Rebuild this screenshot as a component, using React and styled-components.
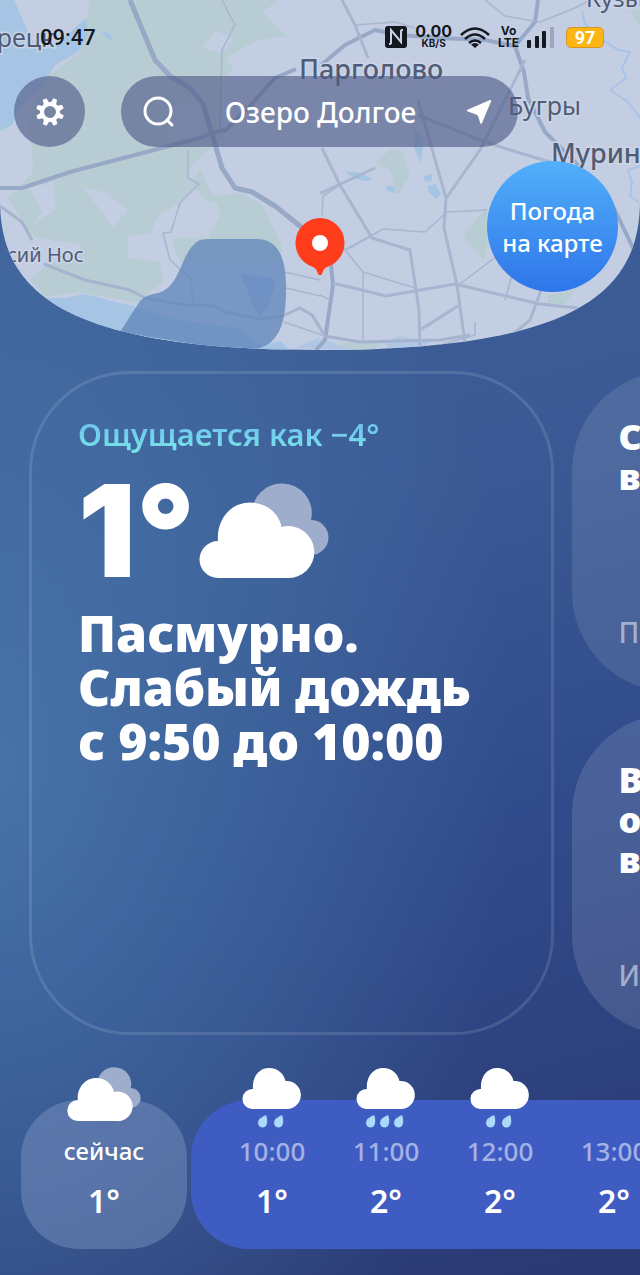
import React from 'react';
import styled, { createGlobalStyle, css } from 'styled-components';

const GlobalStyle = createGlobalStyle`
  * {
    box-sizing: border-box;
  }
  body {
    margin: 0;
    font-family: 'Noto Sans', 'Open Sans', sans-serif;
    color: #ffffff;
    background: #2c3f7c;
  }
  button,
  input {
    padding: 0;
    border: none;
    background: none;
    color: inherit;
    font-family: inherit;
  }
  button {
    cursor: pointer;
  }
  svg {
    display: block;
  }
`;

const Page = styled.div`
  display: flex;
  flex-direction: column;
  min-height: 100vh;
  overflow: hidden;
  background: radial-gradient(ellipse 80% 64% at 0% 60%, rgba(72, 118, 170, 0.9) 0%, rgba(72, 118, 170, 0) 100%),
    linear-gradient(165deg, #3f6199 0%, #3b5a95 40%, #304b8b 66%, #2d427f 84%, #2a3871 100%);
`;

const Header = styled.header`
  display: grid;
  grid-template-columns: minmax(0, 1fr);

  > * {
    grid-area: 1 / 1;
  }
`;

const MapDrawing = styled.svg`
  width: 100%;
  height: auto;

  .place {
    fill: #505b75;
    stroke: #cbd5e6;
    stroke-width: 3px;
    paint-order: stroke;
  }
`;

const HeaderContent = styled.div`
  position: relative;
  display: flex;
  flex-direction: column;
`;

const StatusBar = styled.div`
  display: flex;
  align-items: center;
  justify-content: space-between;
  height: 76px;
  padding: 0 36px 2px 40px;
  font-family: Roboto, sans-serif;
  color: #14181f;
`;

const Clock = styled.time`
  font-size: 22px;
  font-weight: 500;
`;

const StatusIcons = styled.div`
  display: flex;
  align-items: center;
  gap: 8px;
`;

const StackedLabel = styled.div`
  display: flex;
  flex-direction: column;
  align-items: center;
  font-family: Inter, sans-serif;
  font-size: ${(props) => (props.$even ? 12 : 16)}px;
  line-height: 12px;
  font-weight: 700;

  small {
    font-size: ${(props) => (props.$even ? 12 : 10)}px;
    line-height: 12px;
  }
`;

const Battery = styled.div`
  display: flex;
  align-items: center;
  justify-content: center;
  width: 38px;
  height: 21px;
  margin-left: 4px;
  border: 1px solid #d9981c;
  border-radius: 5px;
  background: #fdb515;
  color: #ffffff;
  font-size: 18px;
  font-weight: 700;
`;

const SearchRow = styled.div`
  display: flex;
  gap: 36px;
  padding: 0 122px 0 14px;
`;

const glass = css`
  height: 71px;
  border-radius: 36px;
  background: rgba(80, 92, 136, 0.64);
`;

const SettingsButton = styled.button`
  ${glass}
  display: flex;
  flex-shrink: 0;
  align-items: center;
  justify-content: center;
  width: 71px;
`;

const SearchBox = styled.div`
  ${glass}
  display: flex;
  flex: 1;
  align-items: center;
  min-width: 0;
  padding: 0 26px 0 22px;
`;

const SearchInput = styled.input`
  flex: 1;
  min-width: 0;
  font-size: 28px;
  font-weight: 500;
  text-align: center;
  outline: none;
`;

const MapButton = styled.button`
  align-self: flex-end;
  width: 131px;
  height: 131px;
  margin: 14px 22px 0 0;
  border-radius: 50%;
  background: linear-gradient(180deg, #52b0fa 0%, #2e75ea 100%);
  font-size: 24px;
  line-height: 32px;
  font-weight: 500;
`;

const Cards = styled.main`
  display: flex;
  flex: 1;
  gap: 18px;
  margin-top: 21px;
  padding-left: 29px;
`;

const MainCard = styled.section`
  flex: 0 0 86%;
  min-height: 480px;
  padding: 38px 44px 44px 46px;
  border: 3px solid rgba(255, 255, 255, 0.12);
  border-radius: 100px;
`;

const FeelsLike = styled.p`
  width: fit-content;
  margin: 0;
  background: linear-gradient(180deg, #6cbcf0 15%, #78e2e8 85%);
  background-clip: text;
  color: transparent;
  font-size: 31px;
  line-height: 44px;
  font-weight: 600;
`;

const Current = styled.div`
  display: flex;
  align-items: center;
  gap: 4px;
  height: 150px;
`;

const Temperature = styled.div`
  font-family: Inter, 'Noto Sans', sans-serif;
  font-size: 128px;
  line-height: 144px;
  font-weight: 900;
`;

const Summary = styled.h1`
  margin: 0;
  font-size: 50px;
  line-height: 54px;
  font-weight: 900;
  white-space: nowrap;
`;

const SideCards = styled.div`
  display: flex;
  flex: 0 0 50%;
  flex-direction: column;
  gap: 22px;
`;

const SideCard = styled.section`
  display: flex;
  flex: 1;
  flex-direction: column;
  justify-content: space-between;
  padding: 46px;
  border-radius: 100px;
  background: ${(props) => props.$tone};
`;

const SideTitle = styled.h2`
  margin: 0;
  font-size: 36px;
  line-height: 40px;
  font-weight: 900;
`;

const SideNote = styled.p`
  margin: 0 0 -8px;
  font-size: 28px;
  line-height: 44px;
  font-weight: 500;
  color: rgba(255, 255, 255, 0.5);
`;

const Hours = styled.footer`
  display: flex;
  gap: 4px;
  margin-top: 65px;
  padding: 0 0 26px 21px;
`;

const HourPanel = styled.div`
  display: flex;
  flex: ${(props) => (props.$now ? '0 0 166px' : '0 0 100%')};
  height: 149px;
  padding-left: ${(props) => (props.$now ? 0 : 24)}px;
  border-radius: 58px;
  background: ${(props) => (props.$now ? 'rgba(134, 156, 200, 0.42)' : '#3f5cc2')};
`;

const Hour = styled.div`
  display: flex;
  flex-direction: column;
  align-items: center;
  width: ${(props) => (props.$now ? '100%' : '114px')};
  margin-top: -33px;
`;

const HourIcon = styled.div`
  height: 68px;
`;

const HourTime = styled.div`
  font-size: ${(props) => (props.$now ? 24 : 26)}px;
  line-height: 32px;
  font-weight: 500;
  color: ${(props) => (props.$now ? '#ffffff' : '#a5b2e6')};
`;

const HourTemp = styled.div`
  margin-top: 12px;
  font-size: 32px;
  line-height: 44px;
  font-weight: 600;
`;

const hours = [
  { time: '10:00', temp: '1°', drops: 2 },
  { time: '11:00', temp: '2°', drops: 3 },
  { time: '12:00', temp: '2°', drops: 2 },
  { time: '13:00', temp: '2°', drops: 0 },
];

const sideCards = [
  { lines: ['С', 'в'], note: 'По', tone: 'rgba(255, 255, 255, 0.1)' },
  { lines: ['В', 'о', 'в'], note: 'И', tone: 'rgba(255, 255, 255, 0.12)' },
];

const CITY_ROADS = [
  'M320 193 L323 192 L375 168 M342 0 L355 25 L368 58',
  'M322 148 L340 185 L372 238 L410 250 L419 310 L420 350',
  'M418 100 L446 198 L444 228 L457 285 L466 350',
  'M525 60 L480 150 L447 197',
  'M418 115 L480 140 L510 150 L560 165',
  'M333 283 L386 296 L455 284 L540 304 L578 308',
  'M545 280 L530 320 L500 345 M420 330 L458 306',
];

const THIN_ROADS = [
  'M222 0 L235 25 L222 50 L220 130',
  'M188 150 L188 178 L199 184 L180 203 L171 232 L163 233 L170 260 L190 278 L194 305',
  'M322 216 L323 196 L340 185 M322 222 L345 250 L363 272 L363 340 M350 248 L383 229 L425 232 L447 212',
  'M363 272 L415 288 M345 250 L372 235 M447 212 L487 210 M460 284 L505 250 M505 300 L513 272',
  'M284 272 L320 280 M286 288 L320 296 M284 322 L322 335 M320 295 L330 300 M475 322 L475 335 L440 345',
  'M485 0 L505 16 L540 22 L575 8 L590 0 M355 25 L395 22 L415 28',
];

const MapBackdrop = () => (
  <MapDrawing viewBox="0 0 640 350" aria-hidden="true">
    <clipPath id="map-edge">
      <path d="M0 0H640V200C640 290 580 350 320 350C60 350 0 290 0 200Z" />
    </clipPath>
    <g clipPath="url(#map-edge)">
      <rect width="640" height="350" fill="#c3cee2" />
      <g fill="#b8cdd3">
        <path d="M90 0H280L262 12L287 36L258 40L225 58L234 70L222 80V138L192 165L188 178L199 184L180 203L160 213L150 234L128 236V258L160 262L163 282L136 303L80 292L45 297L30 280L48 264L75 258L82 244L36 238L24 225L8 198L33 172L32 150L27 128L40 82L80 52Z" />
        <path d="M192 185L200 168L212 194L224 196L240 192L262 205L282 245L280 262H180L172 240L205 232L220 216Z" />
        <path d="M390 150L402 150L410 176L398 195L390 170L376 162Z M465 232L487 208V245L484 260L465 240Z" />
        <path d="M630 10H640V28Z M548 295L575 290L565 304H548Z M340 343L385 340L375 350H340Z" />
      </g>
      <g fill="#c3cee2">
        <path d="M64 179L84 187L106 193L128 210L113 227L83 187Z" />
        <path d="M30 188L54 182L55 210L32 225L42 212Z M202 47L216 31L233 38L222 54Z" />
        <path d="M163 214L187 202L217 202L221 214L208 238H176L171 228Z M165 108L205 92L212 132L165 142Z" opacity="0.7" />
      </g>
      <g fill="#a6c5e4">
        <path d="M0 0H14L25 25L35 45L52 48L86 18L88 35L78 52L55 65L41 88L20 108L12 125L0 131Z" />
        <path d="M101 31Q109 30 114 40Q106 40 101 31Z" />
        <path d="M40 298L66 298L84 294L132 306L180 320L236 328L262 345L280 341L290 350H100Z" />
        <path d="M346 172Q360 170 373 180Q360 184 346 172Z M386 186L394 186L396 194L386 190Z M424 176L432 174L431 182L424 181Z M428 186L436 184L441 194L436 199L428 192Z M414 130L424 140L421 164L414 148Z" />
        <path d="M295 348L318 338L330 342L350 350Z M384 342L400 336L430 342L420 350H390Z" opacity="0.7" />
      </g>
      <g fill="none" stroke="#98a8c7" strokeLinejoin="round">
        <path strokeWidth="5" d="M130 0L155 60L170 76L190 88L203 104L212 134L222 168L235 188L252 192L275 206L305 230" />
        <path strokeWidth="4" d="M0 188H22L70 172L200 138L212 133L226 130L248 108L275 78L296 69" />
        <path strokeWidth="4" d="M320 66L345 45L375 30L400 35L440 38L485 40L515 46L524 72L528 98L545 132L575 162L610 200L634 250" />
        <path strokeWidth="4" d="M538 0L535 22L515 46M306 232L330 255L333 285L325 340L316 350" />
        <path strokeWidth="3" stroke="#a5b3cf" d="M0 206L22 222L32 240M44 264L85 280L130 290L145 298L185 305L215 306L225 312L260 319L282 316L300 308L312 315L325 336L360 342L440 340L470 335" />
        {CITY_ROADS.map((d) => (
          <path key={d} d={d} strokeWidth="3" stroke="#a7b5d1" />
        ))}
        {THIN_ROADS.map((d) => (
          <path key={d} d={d} strokeWidth="1.500" stroke="#a7b5d1" />
        ))}
        <path strokeWidth="2" stroke="#a8c3e6" d="M582 10L585 24L600 38L618 50L630 52L622 68L626 78L610 90L628 102L640 118M640 166L628 170L632 182L630 196L638 202" />
      </g>
      <path
        fill="#5c82b8"
        fillOpacity="0.72"
        d="M120 332L140 301Q145 295 158 293C182 287 180 250 200 240Q205 239 212 239H258C282 240 287 265 286 295C285 328 277 346 252 350L200 345Z"
      />
      <path fill="#5c86bf" fillOpacity="0.3" d="M240 274L273 278L275 285L268 307L260 316L254 308L248 292Z" />
      <g className="place" fontFamily="Noto Sans, sans-serif">
        <text x="-16" y="47" fontSize="25">урецк</text>
        <text x="299" y="79" fontSize="27" fontWeight="500">Парголово</text>
        <text x="508" y="115" fontSize="25">Бугры</text>
        <text x="551" y="163" fontSize="27" fontWeight="500">Мурино</text>
        <text x="586" y="7" fontSize="24">Кузьм</text>
        <text x="7" y="262" fontSize="20">сий Нос</text>
      </g>
      <path fill="#ff3d1c" d="M320 218a25 25 0 0 1 8 48.500C324 268 323 271 321.500 275h-3C317 271 316 268 312 266.500A25 25 0 0 1 320 218Z" />
      <circle cx="320" cy="243" r="8" fill="#ffffff" />
    </g>
  </MapDrawing>
);

const GEAR_TEETH = [22, 67, 112, 157, 202, 247, 292, 337];

const GearIcon = () => (
  <svg width="30" height="30" viewBox="-15 -15 30 30">
    <circle r="8" fill="none" stroke="#ffffff" strokeWidth="4" />
    {GEAR_TEETH.map((angle) => (
      <path key={angle} d="M-3 -8L-2 -14H2L3 -8Z" fill="#ffffff" transform={`rotate(${angle})`} />
    ))}
  </svg>
);

const SearchIcon = () => (
  <svg width="32" height="32" viewBox="0 0 32 32" fill="none" stroke="#ffffff" strokeWidth="3" strokeLinecap="round">
    <circle cx="15" cy="15" r="13" />
    <path d="M24 24l5 5" />
  </svg>
);

const ArrowIcon = () => (
  <svg width="26" height="26" viewBox="0 0 26 26">
    <path d="M24 1Q25.500 .5 25 2.500L16 24Q15 26 14 23.500L12.500 18Q12 16 10 15.500L2 12.500Q-.5 11.300 2 10.500Z" fill="#ffffff" />
  </svg>
);

const NfcIcon = () => (
  <svg width="22" height="22" viewBox="0 0 22 22">
    <rect width="22" height="22" rx="3" fill="#14181f" />
    <path d="M6 18V4L16 16V4M4 18H6M16 4H18" fill="none" stroke="#c9d3e5" strokeWidth="2" />
    <path d="M6 5V17M16 5V17" stroke="#c9d3e5" strokeWidth="1.500" />
  </svg>
);

const WifiIcon = () => (
  <svg width="30" height="21" viewBox="0 0 30 21" fill="none" stroke="#14181f" strokeWidth="2.500">
    <path d="M1 8Q15 -5 29 8M5 12Q15 3 25 12M9 16Q15 11 21 16" />
    <path d="M15 21L11 17.500Q15 14.500 19 17.500Z" fill="#14181f" stroke="none" />
  </svg>
);

const SignalIcon = () => (
  <svg width="27" height="21" viewBox="0 0 27 21" fill="#14181f">
    <rect y="13" width="4" height="8" rx="1" />
    <rect x="8" y="9" width="4" height="12" rx="1" />
    <rect x="15" y="4" width="4" height="17" rx="1" />
    <rect x="23" width="4" height="21" rx="1" fill="#9ca6ba" />
  </svg>
);

const CLOUD = 'M19 95A18.500 18.500 0 0 1 19 58C17 38 31 19.500 51 19.500C67 19.500 80 30 82.500 44A26 26 0 1 1 87 95Z';

const CloudsIcon = ({ width }) => (
  <svg width={width} viewBox="0 0 130 96">
    <path d="M82.500 .5A29.500 29.500 0 0 1 112 37A17.500 17.500 0 1 1 112 72H90L53 30A29.500 29.500 0 0 1 82.500 .5Z" fill="#9dadcb" />
    <path d={CLOUD} fill="#ffffff" />
  </svg>
);

const RainIcon = ({ drops }) => (
  <svg width="62" height="62" viewBox="0 0 62 62">
    <path d="M11 42A10 10 0 0 1 12 22C11 10 18 1 28 1C37 1 43 7 44.500 14A14 14 0 1 1 47 42Z" fill="#ffffff" />
    {Array.from({ length: drops }, (_, i) => (
      <path
        key={i}
        d="M8 0C10 4 10 12 5 12.500C-1 12.500 -1 6 2 3.500Q5 1 8 0Z"
        fill="#a9dafa"
        transform={`translate(${drops === 3 ? 11 + i * 14 : 17 + i * 16} 48)`}
      />
    ))}
  </svg>
);

const App = () => {
  return (
    <>
      <GlobalStyle />
      <Page>
        <Header>
          <MapBackdrop />
          <HeaderContent>
            <StatusBar>
              <Clock>09:47</Clock>
              <StatusIcons>
                <NfcIcon />
                <StackedLabel>
                  0.00<small>KB/S</small>
                </StackedLabel>
                <WifiIcon />
                <StackedLabel $even>
                  Vo<small>LTE</small>
                </StackedLabel>
                <SignalIcon />
                <Battery>97</Battery>
              </StatusIcons>
            </StatusBar>
            <SearchRow>
              <SettingsButton aria-label="Настройки">
                <GearIcon />
              </SettingsButton>
              <SearchBox>
                <SearchIcon />
                <SearchInput aria-label="Поиск" defaultValue="Озеро Долгое" />
                <button aria-label="Моё местоположение">
                  <ArrowIcon />
                </button>
              </SearchBox>
            </SearchRow>
            <MapButton>
              Погода
              <br />
              на карте
            </MapButton>
          </HeaderContent>
        </Header>
        <Cards>
          <MainCard>
            <FeelsLike>Ощущается как −4°</FeelsLike>
            <Current>
              <Temperature>1°</Temperature>
              <CloudsIcon width={130} />
            </Current>
            <Summary>
              Пасмурно.
              <br />
              Слабый дождь
              <br />с 9:50 до 10:00
            </Summary>
          </MainCard>
          <SideCards>
            {sideCards.map((card) => (
              <SideCard key={card.note} $tone={card.tone}>
                <SideTitle>
                  {card.lines.map((line, i) => (
                    <div key={i}>{line}</div>
                  ))}
                </SideTitle>
                <SideNote>{card.note}</SideNote>
              </SideCard>
            ))}
          </SideCards>
        </Cards>
        <Hours>
          <HourPanel $now>
            <Hour $now>
              <HourIcon>
                <CloudsIcon width={74} />
              </HourIcon>
              <HourTime $now>сейчас</HourTime>
              <HourTemp>1°</HourTemp>
            </Hour>
          </HourPanel>
          <HourPanel>
            {hours.map((hour) => (
              <Hour key={hour.time}>
                <HourIcon>{hour.drops > 0 && <RainIcon drops={hour.drops} />}</HourIcon>
                <HourTime>{hour.time}</HourTime>
                <HourTemp>{hour.temp}</HourTemp>
              </Hour>
            ))}
          </HourPanel>
        </Hours>
      </Page>
    </>
  );
};

export default App;
